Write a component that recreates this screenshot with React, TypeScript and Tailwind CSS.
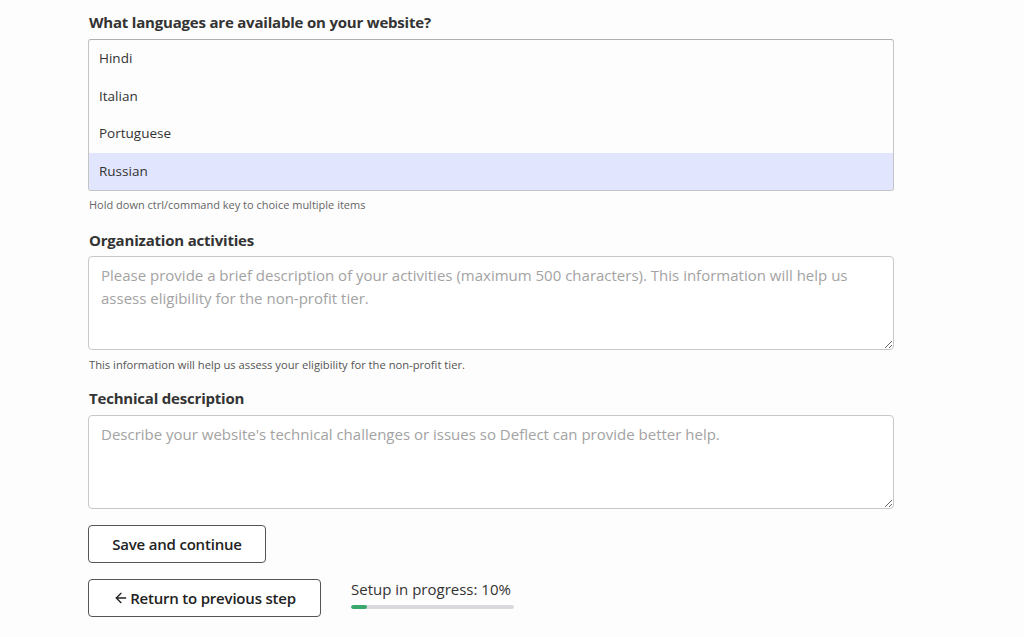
import React from "react";
import { ArrowLeft } from "lucide-react";

const options = ["Hindi", "Italian", "Portuguese", "Russian"];

export default function App() {
  return (
    <div
      className="min-h-[637px] w-full bg-[#fdfdfd] text-[#333]"
      style={{ fontFamily: '"Open Sans", "Noto Sans", sans-serif' }}
    >
      <div className="ml-[88px] w-[806px] pt-[12px]">
        <div className="text-[15px] font-bold leading-[20px] tracking-[-0.2px] text-[#333] pl-[1px]">
          What languages are available on your website?
        </div>
        <div className="mt-[7px] rounded-[3px] border border-[#c4c4c4] border-t-[#b0b0b0] overflow-hidden">
          {options.map((o, i) => (
            <div
              key={o}
              className={
                i === 3
                  ? "h-[37.5px] flex items-center pl-[10px] pb-[1px] text-[13.5px] bg-[#e1e6fe] text-[#333]"
                  : "h-[37.5px] flex items-center pl-[10px] pb-[1px] text-[13.5px] text-[#333]"
              }
            >
              {o}
            </div>
          ))}
        </div>
        <div className="mt-[6px] text-[11px] leading-[16px] text-[#666] pl-[1px]">
          Hold down ctrl/command key to choice multiple items
        </div>

        <div className="mt-[17px] text-[15px] font-bold leading-[20px] tracking-[-0.2px] text-[#333] pl-[1px]">
          Organization activities
        </div>
        <textarea
          className="mt-[6px] block w-full h-[94px] rounded-[4px] border border-[#c8c8c8] bg-white px-[12px] py-[7px] text-[15px] leading-[23px] text-[#333] placeholder:text-[#a3a3a3] outline-none"
          placeholder="Please provide a brief description of your activities (maximum 500 characters). This information will help us assess eligibility for the non-profit tier."
        />
        <div className="mt-[7px] text-[11.2px] leading-[16px] text-[#555] pl-[1px]">
          This information will help us assess your eligibility for the non-profit tier.
        </div>

        <div className="mt-[15px] text-[15px] font-bold leading-[20px] tracking-[-0.2px] text-[#333] pl-[1px]">
          Technical description
        </div>
        <textarea
          className="mt-[7px] block w-full h-[94px] rounded-[4px] border border-[#c8c8c8] bg-white px-[12px] py-[7px] text-[15px] leading-[23px] text-[#333] placeholder:text-[#a3a3a3] outline-none"
          placeholder="Describe your website's technical challenges or issues so Deflect can provide better help."
        />

        <button className="mt-[16px] flex h-[38px] w-[178px] items-center justify-center rounded-[4px] border border-[#555] bg-white text-[15px] font-semibold tracking-[-0.2px] text-[#222]">
          Save and continue
        </button>

        <div className="mt-[16px] flex items-start gap-[30px]">
          <button className="flex h-[38px] w-[233px] items-center justify-center rounded-[4px] border border-[#555] bg-white text-[15px] font-semibold tracking-[-0.2px] text-[#222]">
            <ArrowLeft size={16} strokeWidth={2} className="mr-[1px]" />
            Return to previous step
          </button>
          <div className="w-[163px]">
            <div className="text-[15px] leading-[20px] text-[#333]">Setup in progress: 10%</div>
            <div className="mt-[6px] h-[4px] w-full rounded-full bg-[#d9dade] overflow-hidden">
              <div className="h-full rounded-full bg-[#3aa76d]" style={{ width: "10%" }} />
            </div>
          </div>
        </div>
      </div>
    </div>
  );
}
